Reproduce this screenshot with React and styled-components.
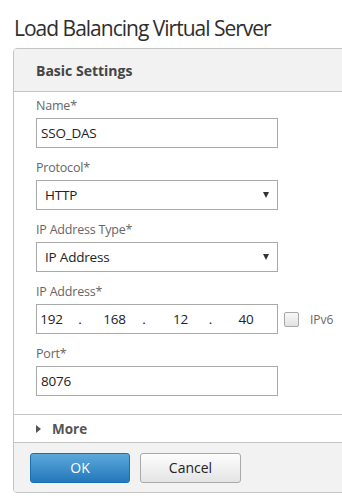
import React from "react"
import styled, { createGlobalStyle } from "styled-components"

const GlobalStyle = createGlobalStyle`
    html, body {
        margin: 0;
        padding: 0;
        background: #ffffff;
        overflow: hidden;
    }
    body {
        font-family: "Open Sans", "Noto Sans", "Liberation Sans", sans-serif;
        color: #333333;
    }
`;

const fields = [
    { label: "Name*", kind: "text", value: "SSO_DAS" },
    { label: "Protocol*", kind: "select", value: "HTTP" },
    { label: "IP Address Type*", kind: "select", value: "IP Address" },
    { label: "IP Address*", kind: "ip", value: ["192", "168", "12", "40"] },
    { label: "Port*", kind: "text", value: "8076" },
];

const App = () => {

    const renderControl = (f) => {
        if (f.kind === "select") {
            return (
                <SelectBox>
                    <span>{f.value}</span>
                    <Arrow />
                </SelectBox>
            );
        }
        if (f.kind === "ip") {
            return (
                <IpRow>
                    <IpBox>
                        {f.value.map((o, i) => (
                            <React.Fragment key={o + i}>
                                {i > 0 && <span>.</span>}
                                <span>{o}</span>
                            </React.Fragment>
                        ))}
                    </IpBox>
                    <Check>
                        <Box />
                        <span>IPv6</span>
                    </Check>
                </IpRow>
            );
        }
        return <TextBox>{f.value}</TextBox>;
    };

    return(
        <>
        <GlobalStyle />
        <Page>
            <Title>Load Balancing Virtual Server</Title>
            <Panel>
                <Header>Basic Settings</Header>
                <Body>
                    {fields.map(f =>
                        <Field key={f.label}>
                            <Label>{f.label}</Label>
                            {renderControl(f)}
                        </Field>
                    )}
                </Body>
                <MoreRow>
                    <Caret />
                    <span>More</span>
                </MoreRow>
                <Footer>
                    <Button primary>OK</Button>
                    <Button>Cancel</Button>
                </Footer>
            </Panel>
        </Page>
        </>
    )

}

const Page = styled.div`
    width: 342px;
    height: 498px;
    overflow: hidden;
    padding-left: 13px;
    box-sizing: border-box;
`;

const Title = styled.h1`
    margin: 0;
    padding: 14px 0 6px 1px;
    font-size: 21px;
    line-height: 28px;
    letter-spacing: -1px;
    font-weight: 400;
    color: #2e2e2e;
    white-space: nowrap;
`;

const Panel = styled.div`
    width: 360px;
    border: 1px solid #c4c4c4;
    border-radius: 4px 0 0 4px;
    overflow: hidden;
    background: #ffffff;
`;

const Header = styled.div`
    height: 42px;
    padding-left: 22px;
    display: flex;
    align-items: center;
    background: #f2f2f2;
    border-bottom: 1px solid #c4c4c4;
    font-size: 14px;
    font-weight: 700;
    color: #444444;
`;

const Body = styled.div`
    padding: 5px 0 18px 22px;
    display: flex;
    flex-direction: column;
    gap: 11px;
`;

const Field = styled.div`
    display: flex;
    flex-direction: column;
`;

const Label = styled.label`
    font-size: 12.5px;
    line-height: 18px;
    letter-spacing: -0.2px;
    margin-bottom: 3px;
    color: #666666;
`;

const TextBox = styled.div`
    width: 242px;
    height: 30px;
    box-sizing: border-box;
    border: 1px solid #a9a9a9;
    padding-left: 4px;
    display: flex;
    align-items: center;
    font-size: 13.5px;
    letter-spacing: -0.2px;
    color: #222222;
`;

const SelectBox = styled(TextBox)`
    padding: 0 8px;
    justify-content: space-between;
`;

const Arrow = styled.span`
    width: 0;
    height: 0;
    border-left: 3px solid transparent;
    border-right: 3px solid transparent;
    border-top: 6px solid #333333;
`;

const IpRow = styled.div`
    display: flex;
    align-items: center;
    gap: 6px;
`;

const IpBox = styled(TextBox)`
    padding: 0 0 0 3px;
    display: grid;
    grid-template-columns: 23px 34px 35px 24px 49px 11px 60px;
    justify-items: center;
`;

const Check = styled.div`
    display: flex;
    align-items: center;
    gap: 11px;
    font-size: 12px;
    color: #666666;
`;

const Box = styled.span`
    width: 15px;
    height: 15px;
    box-sizing: border-box;
    border: 1px solid #a8a8a8;
    border-radius: 2px;
    background: linear-gradient(#f8f8f8, #e2e2e2);
`;

const MoreRow = styled.div`
    height: 27px;
    border-top: 1px solid #c4c4c4;
    border-bottom: 1px solid #c4c4c4;
    padding-left: 22px;
    display: flex;
    align-items: center;
    gap: 11px;
    font-size: 13.5px;
    font-weight: 700;
    color: #555555;
`;

const Caret = styled.span`
    width: 0;
    height: 0;
    border-top: 4.5px solid transparent;
    border-bottom: 4.5px solid transparent;
    border-left: 5px solid #555555;
`;

const Footer = styled.div`
    height: 49px;
    background: #f2f2f2;
    padding-left: 16px;
    display: flex;
    align-items: center;
    gap: 10px;
`;

const Button = styled.button`
    width: ${p => p.primary ? "100px" : "101px"};
    height: 30px;
    border-radius: 3px;
    font-family: inherit;
    font-size: 14px;
    border: 1px solid ${p => p.primary ? "#1c6fae" : "#a9a9a9"};
    color: ${p => p.primary ? "#ffffff" : "#222222"};
    background: ${p => p.primary
        ? "linear-gradient(#5ca8dc, #2378ba)"
        : "linear-gradient(#fdfdfd, #e4e4e4)"};
    padding: 0;
`;

export default App;
